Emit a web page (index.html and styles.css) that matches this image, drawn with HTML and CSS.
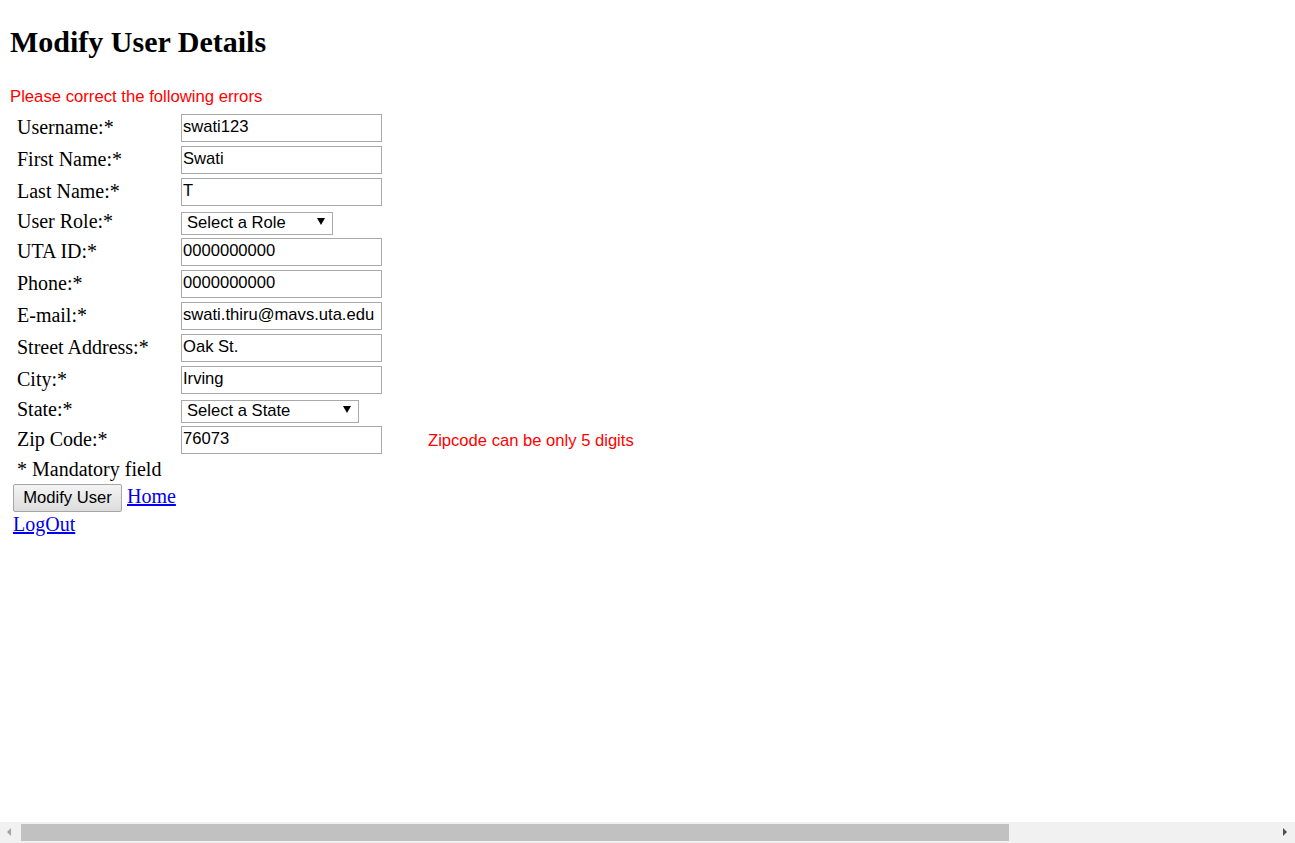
FILE: index.html
```html
<!DOCTYPE html>
<html>
<head>
<meta charset="utf-8">
<title>Modify User Details</title>
<link rel="stylesheet" href="styles.css">
</head>
<body>
<h1 class="title">Modify User Details</h1>
<p class="errors">Please correct the following errors</p>
<form class="form">
  <div class="grid">
    <label class="lbl">Username:*</label>
    <input class="field" type="text" value="swati123">
    <span class="msg"></span>

    <label class="lbl">First Name:*</label>
    <input class="field" type="text" value="Swati">
    <span class="msg"></span>

    <label class="lbl">Last Name:*</label>
    <input class="field" type="text" value="T">
    <span class="msg"></span>

    <label class="lbl">User Role:*</label>
    <div class="sel-wrap sel-role"><select class="sel"><option>Select a Role</option></select><span class="caret"></span></div>
    <span class="msg"></span>

    <label class="lbl">UTA ID:*</label>
    <input class="field" type="text" value="0000000000">
    <span class="msg"></span>

    <label class="lbl">Phone:*</label>
    <input class="field" type="text" value="0000000000">
    <span class="msg"></span>

    <label class="lbl">E-mail:*</label>
    <input class="field" type="text" value="swati.thiru@mavs.uta.edu">
    <span class="msg"></span>

    <label class="lbl">Street Address:*</label>
    <input class="field" type="text" value="Oak St.">
    <span class="msg"></span>

    <label class="lbl">City:*</label>
    <input class="field" type="text" value="Irving">
    <span class="msg"></span>

    <label class="lbl">State:*</label>
    <div class="sel-wrap sel-state"><select class="sel"><option>Select a State</option></select><span class="caret"></span></div>
    <span class="msg"></span>

    <label class="lbl">Zip Code:*</label>
    <input class="field" type="text" value="76073">
    <span class="msg err">Zipcode can be only 5 digits</span>

    <span class="lbl mand">* Mandatory field</span>
  </div>
  <div class="actions">
    <button class="btn" type="button">Modify User</button> <a class="link" href="#">Home</a><br>
    <a class="link" href="#">LogOut</a>
  </div>
</form>
<div class="hscroll">
  <span class="arrow arrow-left"></span>
  <span class="thumb"></span>
  <span class="arrow arrow-right"></span>
</div>
</body>
</html>
```
FILE: styles.css
```css
html, body {
  overflow: hidden;
}
body {
  margin: 8px;
  font-family: "Liberation Serif", "Times New Roman", serif;
  font-size: 20px;
  color: #000;
  background: #fff;
}
.title {
  margin: 16px 0 0 2px;
  font-size: 30px;
  line-height: 36px;
  font-weight: bold;
}
.errors {
  margin: 27px 0 0 2px;
  font-family: "Liberation Sans", Arial, sans-serif;
  font-size: 16.7px;
  line-height: 19px;
  color: #ff0000;
}
.form {
  margin: 8px 0 0 0;
}
.grid {
  display: grid;
  grid-template-columns: 164px 201px auto;
  grid-template-rows: 28px 28px 28px 24px 28px 28px 28px 28px 28px 24px 28px 23px;
  row-gap: 4px;
  column-gap: 0;
  padding-left: 9px;
  align-items: center;
}
.lbl {
  font-size: 20px;
  line-height: 23px;
  margin-bottom: 2px;
  white-space: nowrap;
}
.mand {
  grid-column: 1 / 4;
  margin-bottom: 0;
}
.field {
  box-sizing: border-box;
  width: 201px;
  height: 28px;
  margin: 0;
  padding: 0 1px 2px 1px;
  border: 1px solid #a9a9a9;
  font-family: "Liberation Sans", Arial, sans-serif;
  font-size: 16.6px;
  color: #000;
  background: #fff;
  outline: none;
}
.sel-wrap {
  position: relative;
  height: 23px;
  margin-bottom: 1px;
}
.sel-role { width: 152px; }
.sel-state { width: 178px; }
.sel {
  -webkit-appearance: none;
  appearance: none;
  box-sizing: border-box;
  width: 100%;
  height: 23px;
  margin: 0;
  padding: 0 0 2px 5px;
  border: 1px solid #a9a9a9;
  border-radius: 0;
  background: #fff;
  font-family: "Liberation Sans", Arial, sans-serif;
  font-size: 16.6px;
  color: #000;
}
.caret {
  position: absolute;
  right: 8px;
  top: 8px;
  width: 0;
  height: 0;
  border-left: 4px solid transparent;
  border-right: 4px solid transparent;
  border-top: 7px solid #000;
}
.msg {
  font-family: "Liberation Sans", Arial, sans-serif;
  font-size: 16.6px;
  line-height: 19px;
}
.err {
  color: #ff0000;
  padding-left: 46px;
  white-space: nowrap;
}
.actions {
  margin-top: 3px;
  padding-left: 5px;
  line-height: 25px;
}
.btn {
  box-sizing: border-box;
  width: 109px;
  height: 28px;
  margin: 0;
  padding: 0;
  border: 1px solid #a6a6a6;
  border-radius: 2px;
  background: linear-gradient(#f4f4f4, #dcdcdc);
  font-family: "Liberation Sans", Arial, sans-serif;
  font-size: 16.6px;
  color: #000;
  vertical-align: baseline;
}
.link {
  color: #0000ee;
  text-decoration: underline;
  font-size: 20px;
}
.hscroll {
  position: fixed;
  left: 0;
  bottom: 0;
  width: 100%;
  height: 21px;
  background: #f1f1f1;
}
.thumb {
  position: absolute;
  left: 21px;
  top: 2px;
  width: 988px;
  height: 17px;
  background: #c1c1c1;
}
.arrow {
  position: absolute;
  top: 6px;
  width: 0;
  height: 0;
  border-top: 4.5px solid transparent;
  border-bottom: 4.5px solid transparent;
}
.arrow-left {
  left: 7px;
  border-right: 4.5px solid #a3a3a3;
}
.arrow-right {
  right: 8px;
  border-left: 4.5px solid #505050;
}
```
